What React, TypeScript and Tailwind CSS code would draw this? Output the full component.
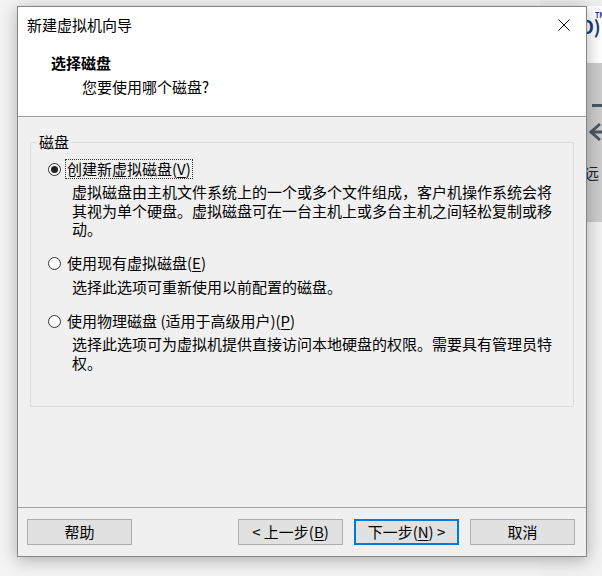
import React from 'react'

const font = "font-['Noto_Sans_CJK_SC','Microsoft_YaHei',sans-serif]"

function Radio({ checked }: { checked?: boolean }) {
  return (
    <span className="flex h-[13px] w-[13px] shrink-0 items-center justify-center rounded-full border border-[#333333] bg-white">
      {checked && <span className="h-[7px] w-[7px] rounded-full bg-[#222222]" />}
    </span>
  )
}

function Option({
  label,
  keyChar,
  suffix,
  checked,
  focused,
  lines,
}: {
  label: string
  keyChar: string
  suffix?: string
  checked?: boolean
  focused?: boolean
  lines: string[]
}) {
  return (
    <div className="flex flex-col">
      <div className="flex h-[20px] items-center">
        <span className="ml-[17px]">
          <Radio checked={checked} />
        </span>
        <span
          className={
            'ml-[5px] flex h-[18px] items-center px-[1px] ' +
            (focused ? 'outline outline-1 outline-dotted outline-[#333333]' : '')
          }
        >
          {label}
          {suffix}(<span className="underline underline-offset-2">{keyChar}</span>)
        </span>
      </div>
      <div className="ml-[41px] mt-[4px] pr-[18px] leading-[18.5px]">
        {lines.map((l) => (
          <div key={l}>{l}</div>
        ))}
      </div>
    </div>
  )
}

function Button({ children, primary }: { children: React.ReactNode; primary?: boolean }) {
  return (
    <button
      className={
        'flex h-[26px] w-[105px] items-center justify-center bg-[#e1e1e1] text-[15px] text-black ' +
        (primary ? 'border-2 border-[#0078d7]' : 'border border-[#adadad]')
      }
    >
      {children}
    </button>
  )
}

export default function App() {
  return (
    <div className={`relative h-[576px] w-[602px] overflow-hidden bg-[#f4f4f4] text-[15px] text-black ${font}`}>
      {/* window behind the dialog */}
      <div className="absolute left-[540px] top-0 flex h-[576px] w-[62px] flex-col">
        <div className="h-[6px] bg-[#eeeeee]" />
        <div className="relative h-[57px] bg-white">
          <span className="absolute left-[40px] top-[11px] text-[18px] font-bold leading-[18px] text-[#1d3c80]">O)</span>
          <span className="absolute left-[55px] top-[5px] text-[7px] font-bold leading-[8px] text-[#1d3c80]">TM</span>
        </div>
        <div className="relative h-[159px] bg-[#cdcdcd]">
          <div className="absolute left-[52px] top-[41px] h-[3px] w-[12px] bg-[#4b5661]" />
          <svg className="absolute left-[48px] top-[59px]" width="16" height="20" viewBox="0 0 16 20">
            <path d="M12 2 L3 10 L12 18" fill="none" stroke="#4b5661" strokeWidth="3" />
            <path d="M4 10 H16" fill="none" stroke="#4b5661" strokeWidth="3" />
          </svg>
          <span className="absolute left-[44px] top-[100px] leading-[20px] text-[#222222]">远</span>
        </div>
        <div className="flex-1 bg-[#f2f2f2]" />
      </div>

      {/* dialog */}
      <div className="absolute left-[17px] top-[6px] flex h-[551px] w-[570px] flex-col border border-[#858585] bg-[#f0f0f0] shadow-[0_3px_16px_rgba(0,0,0,0.3)]">
        <div className="bg-white">
          <div className="flex h-[36px] items-center justify-between pl-[9px] pr-[16px]">
            <span className="leading-[20px]">新建虚拟机向导</span>
            <svg width="12" height="12" viewBox="0 0 12 12">
              <path d="M0.5 0.5 L11.5 11.5 M11.5 0.5 L0.5 11.5" stroke="#111111" strokeWidth="1" />
            </svg>
          </div>
          <div className="h-[73px] pl-[33px] pt-[10px]">
            <div className="font-bold leading-[20px]">选择磁盘</div>
            <div className="ml-[31px] mt-[4px] leading-[20px]">您要使用哪个磁盘?</div>
          </div>
        </div>
        <div className="h-px bg-[#a0a0a0]" />

        <div className="flex-1 px-[12px] pt-[15px]">
          <fieldset className="h-[275px] border border-[#dcdcdc]">
            <legend className="ml-[6px] px-[2px] leading-[20px]">磁盘</legend>
            <div className="flex flex-col gap-[15px] pt-[7px]">
              <Option
                label="创建新虚拟磁盘"
                keyChar="V"
                checked
                focused
                lines={[
                  '虚拟磁盘由主机文件系统上的一个或多个文件组成，客户机操作系统会将',
                  '其视为单个硬盘。虚拟磁盘可在一台主机上或多台主机之间轻松复制或移',
                  '动。',
                ]}
              />
              <Option label="使用现有虚拟磁盘" keyChar="E" lines={['选择此选项可重新使用以前配置的磁盘。']} />
              <Option
                label="使用物理磁盘"
                suffix=" (适用于高级用户)"
                keyChar="P"
                lines={[
                  '选择此选项可为虚拟机提供直接访问本地硬盘的权限。需要具有管理员特',
                  '权。',
                ]}
              />
            </div>
          </fieldset>
        </div>

        <div className="h-px bg-[#a0a0a0]" />
        <div className="flex h-[48px] items-center pl-[9px] pr-[11px]">
          <Button>帮助</Button>
          <div className="flex-1" />
          <div className="flex gap-[11px]">
            <Button>
              &lt; 上一步(<span className="underline underline-offset-2">B</span>)
            </Button>
            <Button primary>
              下一步(<span className="underline underline-offset-2">N</span>) &gt;
            </Button>
            <Button>取消</Button>
          </div>
        </div>
      </div>
    </div>
  )
}
